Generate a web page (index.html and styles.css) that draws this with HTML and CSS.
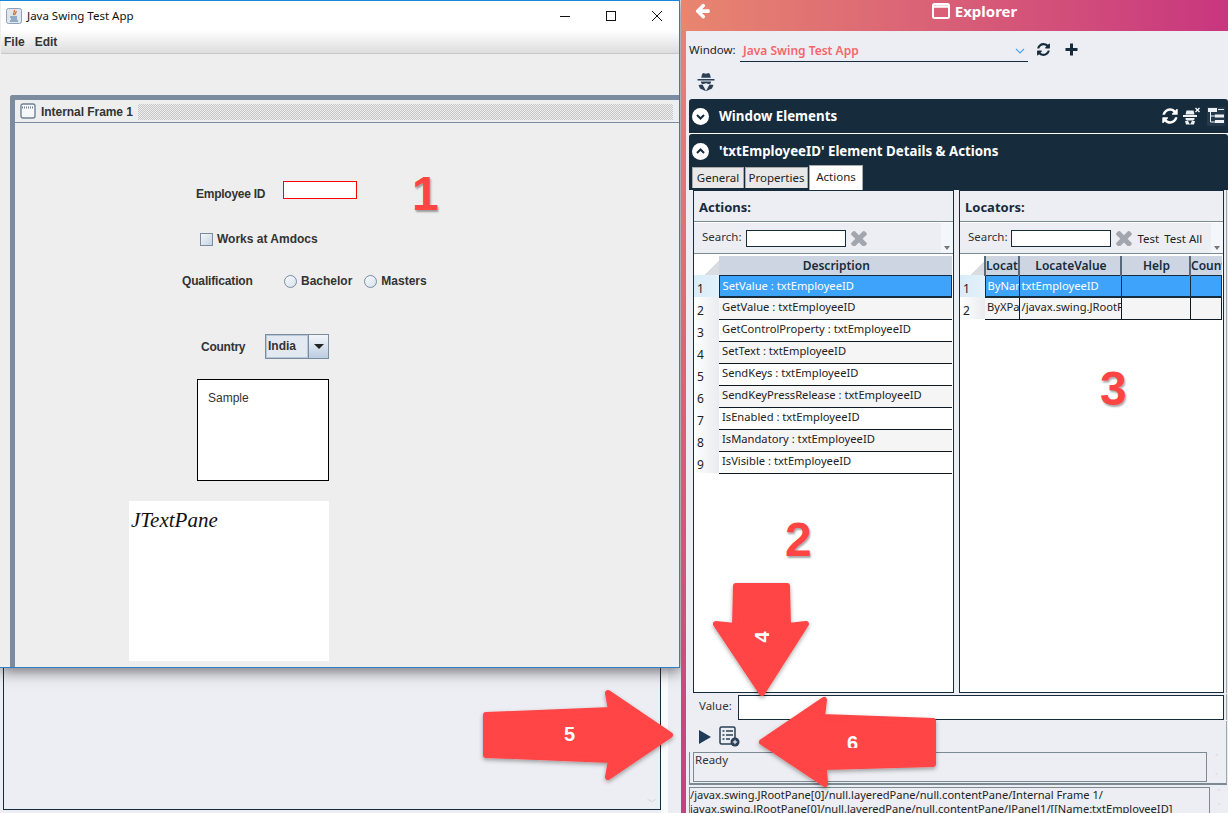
FILE: index.html
```html
<!DOCTYPE html>
<html>
<head>
  <meta charset="UTF-8">
  <title>Java Swing Test App - Explorer</title>
  <link rel="stylesheet" href="styles.css">
</head>
<body>
  <!-- window behind the swing app -->
  <div class="back-window"><span class="back-chevron">&#xfe40;</span></div>

  <!-- swing app -->
  <div class="swing-window">
    <div class="swing-title">
      <svg class="java-icon" width="16" height="16" viewBox="0 0 16 16">
        <rect x="0.5" y="0.5" width="15" height="15" rx="2" fill="#dfe6ee" stroke="#8ea2b8"/>
        <path d="M8 2c2 2-2 3 0 5M10 3c1 2-2 3-1 4" fill="none" stroke="#d8662a" stroke-width="1.2"/>
        <path d="M4 9h7M5 11h6M4 13h8" stroke="#47709c" stroke-width="1.1"/>
      </svg>
      <span class="swing-title-text">Java Swing Test App</span>
      <div class="win-buttons">
        <svg width="12" height="12" viewBox="0 0 12 12"><path d="M1 6.500h10" stroke="#111"/></svg>
        <svg width="12" height="12" viewBox="0 0 12 12"><rect x="1.500" y="1.500" width="9" height="9" fill="none" stroke="#111"/></svg>
        <svg width="12" height="12" viewBox="0 0 12 12"><path d="M1 1l10 10M11 1L1 11" stroke="#111"/></svg>
      </div>
    </div>
    <div class="swing-menu"><span>File</span><span>Edit</span></div>
    <div class="swing-body">
      <div class="internal-frame">
        <div class="frame-title">
          <svg width="16" height="16" viewBox="0 0 16 16">
            <rect x="1" y="1" width="14" height="14" rx="2" fill="#f5f7fa" stroke="#6f8296" stroke-width="1.400"/>
            <path d="M2 4.500h12" stroke="#6f8296" stroke-width="2" stroke-dasharray="1 1"/>
          </svg>
          <span class="frame-title-text">Internal Frame 1</span>
          <div class="frame-dots"></div>
        </div>
        <div class="frame-form">
          <div class="row row-id">
            <span class="lbl lbl-id">Employee ID</span>
            <span class="red-input"></span>
          </div>
          <div class="row row-check">
            <span class="check"></span>
            <span class="lbl">Works at Amdocs</span>
          </div>
          <div class="row row-qual">
            <span class="lbl lbl-qual">Qualification</span>
            <span class="radio"></span><span class="lbl lbl-bach">Bachelor</span>
            <span class="radio"></span><span class="lbl">Masters</span>
          </div>
          <div class="row row-country">
            <span class="lbl lbl-country">Country</span>
            <span class="combo">
              <span class="combo-text">India</span>
              <span class="combo-btn"><i class="combo-caret"></i></span>
            </span>
          </div>
          <div class="sample-box">Sample</div>
          <div class="text-pane">JTextPane</div>
        </div>
      </div>
    </div>
  </div>

  <!-- explorer -->
  <div class="explorer">
    <div class="exp-header">
      <svg class="back-arrow" width="17" height="17" viewBox="0 0 1792 1792"><path fill="#fff" d="M1664 896v128q0 53-32.5 90.5t-84.5 37.5h-704l293 294q38 36 38 90t-38 90l-75 76q-37 37-90 37-52 0-91-37l-651-652q-37-37-37-90 0-52 37-91l651-650q38-38 91-38 52 0 90 38l75 74q38 38 38 91t-38 91l-293 293h704q52 0 84.5 37.5t32.5 90.5z"/></svg>
      <div class="exp-title">
        <svg width="18" height="16" viewBox="0 0 18 16"><rect x="1" y="1" width="16" height="14" rx="1.500" fill="none" stroke="#fff" stroke-width="2"/><path d="M1 3.500h16" stroke="#fff" stroke-width="2.500"/></svg>
        <span>Explorer</span>
      </div>
    </div>
    <div class="exp-pane">
      <div class="window-row">
        <span class="window-label">Window:</span>
        <div class="window-select">
          <span>Java Swing Test App</span>
          <svg width="10" height="6" viewBox="0 0 10 6"><path d="M1 1l4 4 4-4" fill="none" stroke="#4aa3f0" stroke-width="1.200"/></svg>
        </div>
        <svg class="ico-refresh" width="15" height="15" viewBox="0 0 1792 1792"><path fill="#162b3b" d="M1639 1056q0 5-1 7-64 268-268 434.5t-478 166.5q-146 0-282.5-55t-243.5-157l-129 129q-19 19-45 19t-45-19-19-45v-448q0-26 19-45t45-19h448q26 0 45 19t19 45-19 45l-137 137q71 66 161 102t187 36q134 0 250-65t186-179q11-17 53-117 8-23 30-23h192q13 0 22.5 9.5t9.5 22.5zm25-800v448q0 26-19 45t-45 19h-448q-26 0-45-19t-19-45 19-45l138-138q-148-137-349-137-134 0-250 65t-186 179q-11 17-53 117-8 23-30 23h-199q-13 0-22.5-9.5t-9.5-22.5v-7q65-268 270-434.5t480-166.5q146 0 284 55.5t245 156.5l130-129q19-19 45-19t45 19 19 45z"/></svg>
        <svg class="ico-plus" width="13" height="13" viewBox="0 0 13 13"><path d="M6.500 0.500v12M0.500 6.500h12" stroke="#162b3b" stroke-width="3"/></svg>
      </div>
      <div class="spy-row">
        <svg width="20" height="20" viewBox="0 0 20 20">
          <path fill="#2b3f56" d="M6 2.500l1-1.500 3 .8 3-.8 1 1.500.8 3.200H5.200zM1.500 7h17v1.500h-17zM5 9.500h10c0 1.800-.6 2.500-1.800 2.500-1.300 0-1.800-.8-3.200-.8s-1.900.8-3.200.8C5.600 12 5 11.300 5 9.500zM2.500 13l4-.6L10 19l3.500-6.600 4 .6-1.500 3.500-5.500 2.500h-1L4 16.500z"/>
        </svg>
      </div>
      <div class="bar bar-elements">
        <svg class="circle-chev" width="17" height="17" viewBox="0 0 17 17"><circle cx="8.500" cy="8.500" r="8.500" fill="#fff"/><path d="M5 7l3.500 3.500L12 7" fill="none" stroke="#162b3b" stroke-width="2"/></svg>
        <span class="bar-title">Window Elements</span>
        <div class="bar-tools">
          <svg width="18" height="18" viewBox="0 0 1792 1792"><path fill="#fff" d="M1639 1056q0 5-1 7-64 268-268 434.5t-478 166.5q-146 0-282.5-55t-243.5-157l-129 129q-19 19-45 19t-45-19-19-45v-448q0-26 19-45t45-19h448q26 0 45 19t19 45-19 45l-137 137q71 66 161 102t187 36q134 0 250-65t186-179q11-17 53-117 8-23 30-23h192q13 0 22.5 9.5t9.5 22.5zm25-800v448q0 26-19 45t-45 19h-448q-26 0-45-19t-19-45 19-45l138-138q-148-137-349-137-134 0-250 65t-186 179q-11 17-53 117-8 23-30 23h-199q-13 0-22.5-9.5t-9.5-22.5v-7q65-268 270-434.5t480-166.5q146 0 284 55.5t245 156.5l130-129q19-19 45-19t45 19 19 45z"/></svg>
          <svg width="19" height="19" viewBox="0 0 19 19">
            <path fill="#eef1f4" d="M4.500 3.500h7l1 4h-9zM1 8h14v2H1zM3.500 11h9v1.500c-1 1-2 1-4.500 1s-3.500 0-4.500-1zM3 14l3-.3 2 3.800 2-3.800 3 .3-1 3.500H4z"/>
            <path d="M13.500 1l4 4M17.500 1l-4 4" stroke="#fff" stroke-width="1.300"/>
          </svg>
          <svg class="tree-ico" width="18" height="19" viewBox="0 0 18 19">
            <rect width="18" height="19" fill="#24394c"/>
            <path d="M1 1h9v4H1zM8 7.500h9v3H8zM8 13h9v3H8z" fill="#eef1f4"/>
            <path d="M11 2.500h6M3.500 5v10h4.500M3.500 9h4.500" fill="none" stroke="#eef1f4"/>
          </svg>
        </div>
      </div>
      <div class="bar bar-details">
        <div class="bar-head">
          <svg class="circle-chev" width="17" height="17" viewBox="0 0 17 17"><circle cx="8.500" cy="8.500" r="8.500" fill="#fff"/><path d="M5 10l3.500-3.500L12 10" fill="none" stroke="#162b3b" stroke-width="2"/></svg>
          <span class="bar-title">'txtEmployeeID' Element Details &amp; Actions</span>
        </div>
        <div class="tabs">
          <span class="tab tab-general">General</span>
          <span class="tab tab-props">Properties</span>
          <span class="tab tab-active">Actions</span>
        </div>
      </div>

      <div class="panels">
        <div class="panel panel-actions">
          <div class="panel-head">Actions:</div>
          <div class="panel-search">
            <span class="search-label">Search:</span>
            <span class="search-box"></span>
            <svg class="ico-x" width="16" height="16" viewBox="300 300 1200 1200"><path fill="#a3a7ad" d="M1490 1322q0 40-28 68l-136 136q-28 28-68 28t-68-28l-294-294-294 294q-28 28-68 28t-68-28l-136-136q-28-28-28-68t28-68l294-294-294-294q-28-28-28-68t28-68l136-136q28-28 68-28t68 28l294 294 294-294q28-28 68-28t68 28l136 136q28 28 28 68t-28 68l-294 294 294 294q28 28 28 68z"/></svg>
            <span class="overflow-grip"></span>
          </div>
          <table class="grid">
            <colgroup><col class="col-num"><col></colgroup>
            <thead><tr><th class="corner"></th><th>Description</th></tr></thead>
            <tbody>
              <tr class="sel"><td class="num">1</td><td>SetValue : txtEmployeeID</td></tr>
              <tr class="alt"><td class="num">2</td><td>GetValue : txtEmployeeID</td></tr>
              <tr><td class="num">3</td><td>GetControlProperty : txtEmployeeID</td></tr>
              <tr class="alt"><td class="num">4</td><td>SetText : txtEmployeeID</td></tr>
              <tr><td class="num">5</td><td>SendKeys : txtEmployeeID</td></tr>
              <tr class="alt"><td class="num">6</td><td>SendKeyPressRelease : txtEmployeeID</td></tr>
              <tr><td class="num">7</td><td>IsEnabled : txtEmployeeID</td></tr>
              <tr class="alt"><td class="num">8</td><td>IsMandatory : txtEmployeeID</td></tr>
              <tr><td class="num">9</td><td>IsVisible : txtEmployeeID</td></tr>
            </tbody>
          </table>
        </div>
        <div class="panel panel-locators">
          <div class="panel-head">Locators:</div>
          <div class="panel-search">
            <span class="search-label">Search:</span>
            <span class="search-box"></span>
            <svg class="ico-x" width="16" height="16" viewBox="300 300 1200 1200"><path fill="#a3a7ad" d="M1490 1322q0 40-28 68l-136 136q-28 28-68 28t-68-28l-294-294-294 294q-28 28-68 28t-68-28l-136-136q-28-28-28-68t28-68l294-294-294-294q-28-28-28-68t28-68l136-136q28-28 68-28t68 28l294 294 294-294q28-28 68-28t68 28l136 136q28 28 28 68t-28 68l-294 294 294 294q28 28 28 68z"/></svg>
            <span class="test-btn">Test</span>
            <span class="test-btn">Test All</span>
            <span class="overflow-grip"></span>
          </div>
          <table class="grid grid-loc">
            <colgroup><col class="col-num"><col class="col-loc"><col class="col-val"><col class="col-help"><col></colgroup>
            <thead><tr><th class="corner"></th><th class="th-cut">Locate</th><th>LocateValue</th><th>Help</th><th class="th-cut">Count</th></tr></thead>
            <tbody>
              <tr class="sel"><td class="num">1</td><td>ByName</td><td>txtEmployeeID</td><td></td><td></td></tr>
              <tr class="alt"><td class="num">2</td><td>ByXPath</td><td>/javax.swing.JRootPane</td><td></td><td></td></tr>
            </tbody>
          </table>
        </div>
      </div>

      <div class="value-row">
        <span class="value-label">Value:</span>
        <span class="value-box"></span>
      </div>
      <div class="run-row">
        <svg width="12" height="14" viewBox="0 0 12 14"><path d="M0 0l12 7-12 7z" fill="#1f3b57"/></svg>
        <svg width="21" height="21" viewBox="0 0 21 21">
          <rect x="1" y="1" width="15" height="17" rx="1.500" fill="none" stroke="#2b4058" stroke-width="1.500"/>
          <path d="M3.500 5h2M7 5h7M3.500 9h2M7 9h7M3.500 13h2M7 13h4" stroke="#2b4058" stroke-width="1.500"/>
          <circle cx="16" cy="16" r="4.500" fill="#2b4058"/>
          <path d="M16 13.800v4.400M13.800 16h4.400" stroke="#fff"/>
        </svg>
      </div>
      <div class="status-row">
        <div class="status-box">Ready</div>
        <div class="mini-scroll"><i>&#x2c4;</i><i>&#x2c5;</i></div>
      </div>
      <div class="path-row">
        <div class="path-text">/javax.swing.JRootPane[0]/null.layeredPane/null.contentPane/Internal Frame 1/<br>javax.swing.JRootPane[0]/null.layeredPane/null.contentPane/JPanel1/[[Name:txtEmployeeID]</div>
        <div class="mini-scroll"><i>&#x2c4;</i><i>&#x2c5;</i></div>
      </div>
    </div>
  </div>

  <!-- callouts drawn over the screenshot -->
  <svg class="arrows" width="1228" height="813" viewBox="0 0 1228 813">
    <defs>
      <filter id="arrow-shadow" x="-10%" y="-10%" width="120%" height="120%">
        <feDropShadow dx="0" dy="2" stdDeviation="2" flood-color="#000" flood-opacity="0.35"/>
      </filter>
    </defs>
    <g fill="#ff4444" stroke="#ff4444" stroke-width="6" stroke-linejoin="round" filter="url(#arrow-shadow)">
      <path d="M736 586H787L788 626 806 624 762 693 716 624 735 626Z"/>
      <path d="M486 715 611 710 608 693 670 735 608 777 611 760 486 755Z"/>
      <path d="M762 742 824 700 822 717 933 721V764L824 767 825 784Z"/>
    </g>
  </svg>
  <span class="num-big num-1">1</span>
  <span class="num-big num-2">2</span>
  <span class="num-big num-3">3</span>
  <span class="num-small num-4">4</span>
  <span class="num-small num-5">5</span>
  <span class="num-small num-6">6</span>
</body>
</html>
```

FILE: styles.css
```css
html, body {
  margin: 0;
  padding: 0;
}

body {
  position: relative;
  width: 1228px;
  height: 813px;
  overflow: hidden;
  background: #edeef3;
  font-family: "Noto Sans", "Open Sans", sans-serif;
  font-size: 11.5px;
  color: #1a1a1a;
}

/* window behind */
.back-window {
  position: absolute;
  left: 3px;
  top: 660px;
  width: 656px;
  height: 149px;
  border: solid #162b3b;
  border-width: 0 1px 1px 1px;
  background: #edeef3;
}

.back-window::after {
  content: "";
  position: absolute;
  left: 657px;
  top: 0;
  width: 7px;
  height: 153px;
  background: #fbfbfd;
}

.back-chevron {
  position: absolute;
  right: 3px;
  bottom: 0;
  color: #c9ccd2;
  font-size: 10px;
}

/* swing app */
.swing-window {
  position: absolute;
  left: 0;
  top: 0;
  width: 678px;
  height: 666px;
  border: 1px solid #2f7fc4;
  border-top-color: #1a86d9;
  border-left: 0;
  padding-left: 1px;
  background: #eeeeee;
  box-shadow: 0 3px 14px rgba(50, 50, 60, 0.7);
  display: flex;
  flex-direction: column;
  overflow: hidden;
  font-family: "Liberation Sans", Arial, sans-serif;
}

.swing-title {
  height: 29px;
  flex: none;
  display: flex;
  align-items: center;
  padding-left: 5px;
  background: #fff;
  font-family: "Noto Sans", sans-serif;
  font-size: 11.5px;
}

.swing-title-text {
  margin-left: 5px;
  color: #111;
}

.win-buttons {
  margin-left: auto;
  display: flex;
  gap: 34px;
  padding-right: 16px;
}

.swing-menu {
  height: 23px;
  flex: none;
  display: flex;
  gap: 10px;
  align-items: center;
  padding-left: 3px;
  background: linear-gradient(#ffffff, #dddddd);
  border-bottom: 1px solid #c8c8c8;
  font-weight: bold;
  font-size: 12px;
  color: #333;
}

.swing-body {
  flex: 1;
  padding: 41px 0 0 9px;
  min-height: 0;
  overflow: hidden;
}

.internal-frame {
  height: 640px;
  border: solid #7c8ca0;
  border-width: 5px 0 0 5px;
  border-top-left-radius: 3px;
  background: #eeeeee;
}

.frame-title {
  height: 22px;
  display: flex;
  align-items: center;
  padding-left: 5px;
  border-bottom: 1px solid #7c8ca0;
  background: #eeeeee;
}

.frame-title-text {
  margin: 2px 0 0 5px;
  font-weight: bold;
  font-size: 12px;
  letter-spacing: -0.05px;
  color: #333;
}

.frame-dots {
  flex: 1;
  height: 16px;
  margin: 1px 6px 0 5px;
  background: repeating-conic-gradient(#c6c6c6 0 25%, #eeeeee 0 50%) 0 0 / 2px 2px;
}

.frame-form {
  display: flex;
  flex-direction: column;
  font-size: 12px;
}

.lbl {
  font-weight: bold;
  font-size: 12px;
  color: #333;
}

.row {
  display: flex;
  align-items: center;
}

.row-id {
  margin: 58px 0 0 181px;
  height: 18px;
}

.lbl-id {
  width: 69px;
  margin-top: 8px;
  letter-spacing: -0.25px;
  white-space: nowrap;
}

.red-input {
  width: 72px;
  height: 16px;
  margin-left: 18px;
  border: 1px solid #ff0000;
  background: #fff;
}

.row-check {
  margin: 33px 0 0 185px;
  height: 14px;
  gap: 4px;
}

.check {
  width: 11px;
  height: 11px;
  border: 1px solid #7c8ca0;
  background: linear-gradient(135deg, #f4f7fb, #c4d3e4);
}

.row-qual {
  margin: 28px 0 0 167px;
  height: 14px;
}

.lbl-qual {
  width: 102px;
  letter-spacing: -0.15px;
}

.radio {
  width: 11px;
  height: 11px;
  margin-right: 4px;
  border: 1px solid #7c8ca0;
  border-radius: 50%;
  background: linear-gradient(135deg, #f8fafc, #d6e0ec);
}

.lbl-bach {
  margin-right: 12px;
}

.row-country {
  margin: 46px 0 0 186px;
  height: 25px;
}

.lbl-country {
  width: 64px;
  letter-spacing: -0.25px;
}

.combo {
  display: flex;
  width: 62px;
  height: 23px;
  border: 1px solid #7c8ca0;
  background: #e3e9f1;
}

.combo-text {
  width: 39px;
  padding-left: 1px;
  line-height: 21px;
  margin: 0;
  border: 1px solid #b8c7d8;
  font-weight: bold;
  color: #333;
}

.combo-btn {
  flex: 1;
  display: flex;
  align-items: center;
  justify-content: center;
  border-left: 1px solid #7c8ca0;
  background: linear-gradient(#f2f6fa, #bccde0);
}

.combo-caret {
  border: solid transparent;
  border-width: 5px 5px 0;
  border-top-color: #222;
}

.sample-box {
  width: 120px;
  height: 89px;
  margin: 20px 0 0 182px;
  padding: 11px 0 0 10px;
  border: 1px solid #000;
  background: #fff;
  font-size: 12px;
  color: #333;
}

.text-pane {
  width: 198px;
  height: 160px;
  margin: 20px 0 0 114px;
  padding-left: 2px;
  background: #fff;
  font: italic 21px/38px "Liberation Serif", serif;
  color: #111;
}

/* explorer */
.explorer {
  position: absolute;
  left: 681px;
  top: 0;
  width: 547px;
  height: 813px;
  display: flex;
  flex-direction: column;
  background: linear-gradient(#e78670, #c93e80);
}

.exp-header {
  height: 31px;
  flex: none;
  position: relative;
  display: flex;
  align-items: center;
  justify-content: center;
  background: linear-gradient(90deg, #e8866f, #c8367f);
  color: #fff;
}

.back-arrow {
  position: absolute;
  left: 13px;
  top: 2px;
}

.exp-title {
  display: flex;
  align-items: center;
  gap: 5px;
  margin: -9px 0 0 40px;
  font-weight: bold;
  font-size: 15px;
}

.exp-pane {
  flex: 1;
  margin-left: 5px;
  min-height: 0;
  display: flex;
  flex-direction: column;
  background: #edeef3;
}

.window-row {
  height: 28px;
  margin-top: 4px;
  padding-left: 3px;
  flex: none;
  display: flex;
  align-items: center;
}

.window-label {
  width: 51px;
  color: #222;
}

.window-select {
  width: 288px;
  height: 21px;
  display: flex;
  align-items: center;
  justify-content: space-between;
  padding-right: 3px;
  box-sizing: border-box;
  padding-left: 3px;
  margin-top: 4px;
  border-bottom: 1px solid #162b3b;
  color: #f5656b;
  font-weight: 600;
  font-size: 12px;
}

.ico-refresh {
  margin-left: 8px;
}

.ico-plus {
  margin-left: 14px;
}

.spy-row {
  flex: none;
  box-sizing: border-box;
  height: 36px;
  padding: 9px 0 0 10px;
}

.bar {
  margin-left: 3px;
  background: #162b3b;
  color: #fff;
}

.bar-elements {
  height: 34px;
  flex: none;
  display: flex;
  align-items: center;
  padding-left: 3px;
  border-radius: 3px 3px 0 0;
  border-bottom: 1px solid #fff;
}

.bar-title {
  margin-left: 10px;
  font-weight: 700;
  font-size: 13.3px;
}

.bar-tools {
  margin-left: auto;
  display: flex;
  align-items: center;
  gap: 3px;
  padding-right: 3px;
}

.tree-ico {
  margin-left: 3px;
}

.bar-details {
  height: 56px;
  flex: none;
  border-radius: 3px 3px 0 0;
}

.bar-head {
  display: flex;
  align-items: center;
  height: 34px;
  padding-left: 3px;
}

.tabs {
  display: flex;
  align-items: flex-end;
  height: 25px;
  margin-top: -3px;
  padding-left: 3px;
}

.tab {
  height: 21px;
  line-height: 20px;
  margin: 0 1px 2px 0;
  box-sizing: border-box;
  text-align: center;
  color: #222;
  background: #e8e8e8;
  border: 1px solid #aaa;
  border-bottom: 0;
}

.tab-general {
  width: 52px;
}

.tab-props {
  width: 63px;
}

.tab-active {
  width: 54px;
  height: 25px;
  line-height: 22px;
  background: #fff;
  margin: 0;
}

.panels {
  height: 503px;
  flex: none;
  display: flex;
  gap: 5px;
  padding: 0 0 0 7px;
  margin-right: 1px;
  box-sizing: border-box;
  border-right: 1px solid #9aa5ae;
}

.panel {
  height: 503px;
  box-sizing: border-box;
  border: 1px solid #162b3b;
  background: #fff;
}

.panel-actions {
  width: 261px;
}

.panel-locators {
  width: 265px;
}

.panel-head {
  height: 31px;
  box-sizing: border-box;
  padding: 1px 0 0 5px;
  line-height: 31px;
  font-weight: 700;
  font-size: 13px;
  color: #162b3b;
  background: #edeef3;
  border-bottom: 1px solid #7c8a94;
}

.panel-search {
  height: 32px;
  box-sizing: border-box;
  display: flex;
  align-items: center;
  position: relative;
  padding-left: 8px;
  background: #edeef3;
  border-top: 1px solid #fff;
  border-bottom: 1px solid #7c8a94;
  color: #333;
}

.search-label {
  margin-top: -4px;
}

.search-box {
  width: 98px;
  height: 15px;
  margin-left: 5px;
  border: 1px solid #162b3b;
  background: #fff;
}

.panel-locators .search-box {
  margin-left: 4px;
}

.ico-x {
  margin-left: 5px;
}

.test-btn {
  margin-left: 5px;
  color: #222;
}

.overflow-grip {
  position: absolute;
  right: 0;
  top: 0;
  width: 12px;
  height: 30px;
  background: #f3f6fb;
}

.overflow-grip::after {
  content: "";
  position: absolute;
  left: 3px;
  bottom: 3px;
  border: solid transparent;
  border-width: 4px 3px 0;
  border-top-color: #777;
}

/* grids */
.grid {
  width: calc(100% - 1px);
  table-layout: fixed;
  border-collapse: collapse;
  margin-top: 2px;
  font-size: 11.2px;
}

.col-num {
  width: 25px;
}

.grid th {
  height: 19px;
  padding: 0 0 0 2px;
  box-sizing: border-box;
  background: #cdd5e3;
  font-size: 12px;
  font-weight: 600;
  color: #162b3b;
  text-align: center;
  overflow: hidden;
  white-space: nowrap;
}

.grid th.corner {
  background: linear-gradient(135deg, #fff 68%, #d9dde2 68%);
}

.grid td {
  height: 22px;
  padding: 0 0 4px 3px;
  box-sizing: border-box;
  border-bottom: 1px solid #0d1a24;
  overflow: hidden;
  white-space: nowrap;
  color: #222;
  background: #fff;
}

.grid td.num {
  padding: 4px 0 0 3px;
  border-bottom: 0;
  background: linear-gradient(90deg, #fff, #e9ebef);
  font-size: 12px;
  color: #222;
}

.grid tr.alt td {
  background: #f5f5f5;
}

.grid tr.alt td.num {
  background: linear-gradient(90deg, #fff, #e9ebef);
}

.grid tr.sel td {
  padding-bottom: 1px;
  background: #3ea3fb;
  color: #fff;
  border: 1px solid #162b3b;
  border-bottom-width: 2px;
}

.grid tr.sel td.num {
  padding: 4px 0 0 3px;
  background: linear-gradient(90deg, #d8ecf8, #e3f1fa);
  color: #222;
  border: 0;
}

.grid-loc th {
  border-left: 2px solid #59697a;
}

.grid-loc th.corner {
  border-left: 0;
}

.grid-loc th.th-cut {
  padding-left: 0;
  text-align: left;
}

.grid-loc td {
  border-right: 1px solid #0d1a24;
  padding-left: 2px;
}

.grid-loc td.num {
  border-right: 0;
}

.col-loc {
  width: 34px;
}

.col-val {
  width: 102px;
}

.col-help {
  width: 69px;
}

/* bottom rows */
.value-row {
  height: 26px;
  flex: none;
  display: flex;
  align-items: center;
  margin: 1px 1px 0 0;
  padding-left: 7px;
  border-right: 1px solid #9aa5ae;
}

.value-label {
  width: 45px;
  padding: 0 0 4px 6px;
  box-sizing: border-box;
  color: #333;
}

.value-box {
  width: 484px;
  height: 23px;
  border: 1px solid #162b3b;
  background: #fff;
}

.run-row {
  height: 31px;
  flex: none;
  display: flex;
  align-items: center;
  gap: 8px;
  padding-left: 13px;
  margin: 1px 1px 0 0;
  border-right: 1px solid #9aa5ae;
}

.status-row {
  height: 31px;
  flex: none;
  display: flex;
  border-bottom: 2px solid #7c8a94;
  border-left: 1px solid #7c8a94;
  border-right: 1px solid #9aa5ae;
  margin: 0 1px 0 3px;
  padding-left: 3px;
}

.status-box {
  width: 511px;
  height: 28px;
  padding-left: 1px;
  line-height: 13px;
  border: 1px solid #7c8a94;
  color: #333;
  background: #edeef3;
}

.mini-scroll {
  flex: 1;
  display: flex;
  flex-direction: column;
  justify-content: space-between;
  align-items: center;
  color: #c9ccd2;
  font-size: 9px;
  line-height: 12px;
}

.mini-scroll i {
  font-style: normal;
}

.path-row {
  flex: 1;
  display: flex;
  margin: 2px 0 0 3px;
  min-height: 0;
  overflow: hidden;
}

.path-text {
  width: 519px;
  height: 30px;
  border: 1px solid #7c8a94;
  border-bottom: 0;
  font-size: 11.1px;
  line-height: 14px;
  white-space: nowrap;
  overflow: hidden;
  color: #222;
}

/* callouts */
.arrows {
  position: absolute;
  left: 0;
  top: 0;
}

.num-big {
  position: absolute;
  color: #ff4444;
  font: bold 48px/48px "Liberation Sans", Arial, sans-serif;
  text-shadow: 1px 2px 2px rgba(0, 0, 0, 0.35);
}

.num-1 {
  left: 412px;
  top: 170px;
}

.num-2 {
  left: 785px;
  top: 516px;
}

.num-3 {
  left: 1100px;
  top: 365px;
}

.num-small {
  position: absolute;
  color: #fff;
  font: bold 20px/20px "Liberation Sans", Arial, sans-serif;
}

.num-4 {
  left: 756px;
  top: 627px;
  transform: rotate(-90deg);
}

.num-5 {
  left: 564px;
  top: 724px;
}

.num-6 {
  left: 847px;
  top: 733px;
  height: 15px;
  overflow: hidden;
}
```
